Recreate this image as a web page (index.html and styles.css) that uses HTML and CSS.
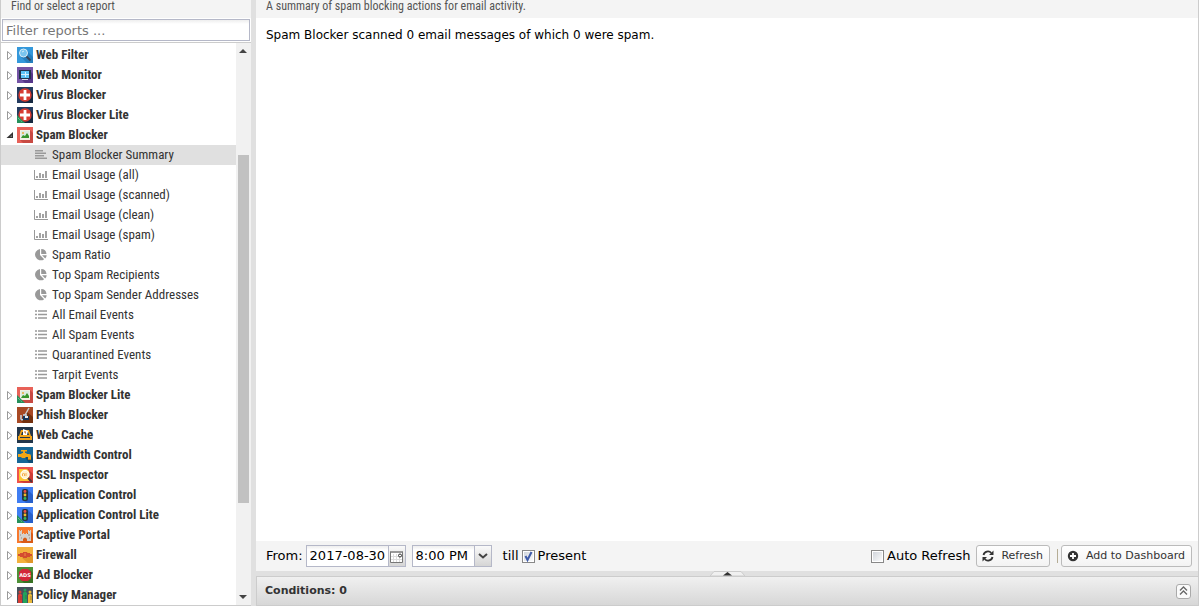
FILE: index.html
```html
<!DOCTYPE html>
<html lang="en">
<head>
<meta charset="utf-8">
<title>Reports - Spam Blocker Summary</title>
<link rel="stylesheet" href="styles.css">
</head>
<body>
<svg class="sprite" aria-hidden="true">
  <symbol id="closed" viewBox="0 0 16 16"><path d="M6.500 4.500v8l4.500-4z" fill="#fff" stroke="#999"/></symbol>
  <symbol id="open" viewBox="0 0 16 16"><path d="M12 5v6H5.500z" fill="#333"/><path d="M11 8v2H9z" fill="#777"/></symbol>
  <symbol id="lite" viewBox="0 0 16 16"><path d="M0 8l8 8H0z" fill="#25915b"/><path d="M1 11l4 4" stroke="#8fd4a9" stroke-dasharray="1 1"/></symbol>
  <symbol id="webfilter" viewBox="0 0 16 16"><path fill="#3498db" d="M0 0h16v16H0z"/><path d="M10 4l6 6v6H10L4 10z" fill="#267fbd"/><circle cx="6.500" cy="6" r="4" fill="#79c5ef" stroke="#d9edf7"/><path d="M5 5l2-1" stroke="#d9edf7"/><path d="M9.500 9.500l4 4" stroke="#35455c" stroke-width="2"/></symbol>
  <symbol id="monitor" viewBox="0 0 16 16"><path fill="#7453a5" d="M0 0h16v16H0z"/><path d="M13 4l3 3v9H8l-3-3z" fill="#56368a"/><path fill="#24334d" d="M2 3h12v9H2z"/><path fill="#5cc3f5" d="M4 4h8v7H4z"/><path d="M4 7.500h8M8.500 5v5" fill="none" stroke="#d8f2ff"/><path d="M5 12.500h6" stroke="#d8dce8"/></symbol>
  <symbol id="virus" viewBox="0 0 16 16"><path fill="#243b5f" d="M0 0h16v16H0z"/><path d="M13 3l3 3v10H7l-4-4z" fill="#162941"/><circle cx="8" cy="8" r="6.700" fill="#d63c32"/><path d="M8 3v10M3 8h10" stroke="#fff" stroke-width="2.800"/></symbol>
  <symbol id="spam" viewBox="0 0 16 16"><path fill="#e86158" d="M0 0h16v16H0z"/><path d="M13 3l3 3v10H6l-3-3z" fill="#c84a42"/><path fill="#f2eee3" d="M3 3h10v10H3z"/><path fill="#dcebe0" d="M4 4h8v7H4z"/><path fill="#37952c" d="M4 11l2-3 2 1 2-3 2 3v2z"/><circle cx="6" cy="6" r="1" fill="#eba63b"/></symbol>
  <symbol id="phish" viewBox="0 0 16 16"><path fill="#a84924" d="M0 0h16v16H0z"/><path d="M10 5l6 5v6H6l-3-3z" fill="#75310e"/><path d="M8 8l4-7" stroke="#ccc" stroke-width="1.500" fill="none"/><path d="M4 8v4q1 2 2 0M6 8h4" stroke="#c7d8e5" stroke-width="1.500" fill="none"/><path fill="#17365c" d="M6 9h6v4H6z"/><path fill="#e8edf2" d="M8 9h3v2H8z"/></symbol>
  <symbol id="cache" viewBox="0 0 16 16"><path fill="#22364b" d="M0 0h16v16H0z"/><path fill="#f3a51c" d="M4 3h8l2 6H2zM1 9h14v4H1z"/><path fill="#22364b" d="M5 5h6l1 3H4z"/><path fill="#fff" d="M6 2l5 2-1 4H6z"/><path d="M8 4v2h1" stroke="#ba641f" fill="none"/><path d="M3 10.500h10" stroke="#22364b"/></symbol>
  <symbol id="bandwidth" viewBox="0 0 16 16"><path fill="#176797" d="M0 0h16v16H0z"/><path d="M7 9l7-1 2 3v5h-4z" fill="#0e4e78"/><path fill="#f4a615" d="M1 7h3l1-1h4l1 1h2q2 0 2 2v3h-3v-2H9l-1 1H5l-1-1H1zM6 4h2v2H6zM4 3h6v1.500H4z"/><path d="M11 12.500h3" stroke="#c57b0c"/></symbol>
  <symbol id="ssl" viewBox="0 0 16 16"><path fill="#f0534b" d="M0 0h16v16H0z"/><path d="M11 2l5 5v9H7l-5-2z" fill="#ce3d34"/><path fill="#fcc431" d="M2 2h8l2 2v10H2z"/><circle cx="8" cy="7.500" r="4.200" fill="#fff1cb" stroke="#fff"/><path d="M5.500 9V7q1-2 2 0v2M9 6v3" stroke="#f3ac50" fill="none"/><path d="M11 11l4 4" stroke="#55343d" stroke-width="2"/></symbol>
  <symbol id="app" viewBox="0 0 16 16"><path fill="#3f7df2" d="M0 0h16v16H0z"/><path d="M10 2l6 6v8H9l-3-3z" fill="#2860ca"/><rect x="5" y="2" width="6" height="12" rx="2" fill="#263343"/><circle cx="8" cy="4.500" r="1.400" fill="#ef5146"/><circle cx="8" cy="8" r="1.400" fill="#f1ba28"/><circle cx="8" cy="11.500" r="1.400" fill="#31b75a"/></symbol>
  <symbol id="captive" viewBox="0 0 16 16"><path fill="#f8792d" d="M0 0h16v16H0z"/><path d="M13 4l3 3v9H5l-3-3z" fill="#d95b17"/><path fill="#d4d0cc" d="M2 3h1v1h1V3h1v4h1V6h1v1h2V6h1v1h1V3h1v1h1V3h1v11h-4v-2q-2-3-4 0v2H2z"/><path d="M3 8h1M4 11h1M11 8h2M12 11h1" stroke="#918a85"/></symbol>
  <symbol id="firewall" viewBox="0 0 16 16"><path fill="#f3b13d" d="M0 0h16v16H0z"/><path d="M10 5l6 4v7h-5l-6-5z" fill="#e09629"/><path d="M1 8h14" stroke="#d24d30" stroke-width="2"/><path fill="#d44b30" d="M3 6h4v4H3zM9 6h4v4H9zM6 5h4v6H6z"/><path d="M8 6v3" stroke="#ed8d43"/></symbol>
  <symbol id="ads" viewBox="0 0 16 16"><path fill="#4e9137" d="M0 0h16v16H0z"/><path d="M13 3l3 3v10H7l-4-4z" fill="#397224"/><path fill="#d32639" d="M5 2h6l3 3v6l-3 3H5l-3-3V5z"/></symbol>
  <symbol id="policy" viewBox="0 0 16 16"><path fill="#46515c" d="M0 0h16v16H0z"/><path fill="#d83d35" d="M1 8q2-3 4 0v8H1z"/><circle cx="3" cy="5" r="1.500" fill="#d83d35"/><path fill="#21a35a" d="M6 6q2-3 4 0v10H6z"/><circle cx="8" cy="3" r="1.500" fill="#21a35a"/><path fill="#e9b838" d="M11 8q2-3 4 0v8h-4z"/><circle cx="13" cy="5" r="1.500" fill="#e9b838"/><path d="M4 9v4M9 8v4M14 9v4" stroke="#443536" opacity=".4"/></symbol>
  <symbol id="text" viewBox="0 0 14 14"><path d="M1 2.700h8M1 5.200h11M1 7.700h9M1 10.200h12" stroke="#999" stroke-width="1.500"/></symbol>
  <symbol id="chart" viewBox="0 0 14 14"><path d="M.5 2v9.500H14" stroke="#999" fill="none"/><path d="M3 8v2M6 5v5M9 6v4M12 3v7" stroke="#999" stroke-width="1.800"/></symbol>
  <symbol id="pie" viewBox="0 0 14 14"><path fill="#999" d="M6 1v6l4.200 4.200A5.700 5.700 0 1 1 6 1zM7.200 1A5.500 5.500 0 0 1 12.500 6H7.200zM8 7.200h4.700a5 5 0 0 1-1.500 3.300z"/></symbol>
  <symbol id="list" viewBox="0 0 14 14"><path d="M1 3h2M1 6.500h2M1 10h2M4 3h9M4 6.500h9M4 10h9" stroke="#999" stroke-width="1.700"/></symbol>
  <symbol id="up" viewBox="0 0 8 4"><path d="M0 4l4-4 4 4z" fill="#444"/></symbol>
  <symbol id="down" viewBox="0 0 8 4"><path d="M0 0h8L4 4z" fill="#444"/></symbol>
  <symbol id="tick" viewBox="0 0 13 13"><path d="M3.500 6l2 4 4-8" fill="none" stroke="#3f5ba8" stroke-width="2"/></symbol>
</svg>
<div class="app">
  <aside class="sidebar">
    <header class="heading">Find or select a report</header>
    <div class="filter"><input type="text" placeholder="Filter reports ..." aria-label="Filter reports"></div>
    <div class="tree-panel">
      <ul class="tree">
        <li><svg><use href="#closed"/></svg><svg><use href="#webfilter"/></svg><span>Web Filter</span></li>
        <li><svg><use href="#closed"/></svg><svg><use href="#monitor"/></svg><span>Web Monitor</span></li>
        <li><svg><use href="#closed"/></svg><svg><use href="#virus"/></svg><span>Virus Blocker</span></li>
        <li><svg><use href="#closed"/></svg><svg><use href="#virus"/><use href="#lite"/></svg><span>Virus Blocker Lite</span></li>
        <li><svg><use href="#open"/></svg><svg><use href="#spam"/></svg><span>Spam Blocker</span></li>
        <li class="report selected"><svg><use href="#text"/></svg><span>Spam Blocker Summary</span></li>
        <li class="report"><svg><use href="#chart"/></svg><span>Email Usage (all)</span></li>
        <li class="report"><svg><use href="#chart"/></svg><span>Email Usage (scanned)</span></li>
        <li class="report"><svg><use href="#chart"/></svg><span>Email Usage (clean)</span></li>
        <li class="report"><svg><use href="#chart"/></svg><span>Email Usage (spam)</span></li>
        <li class="report"><svg><use href="#pie"/></svg><span>Spam Ratio</span></li>
        <li class="report"><svg><use href="#pie"/></svg><span>Top Spam Recipients</span></li>
        <li class="report"><svg><use href="#pie"/></svg><span>Top Spam Sender Addresses</span></li>
        <li class="report"><svg><use href="#list"/></svg><span>All Email Events</span></li>
        <li class="report"><svg><use href="#list"/></svg><span>All Spam Events</span></li>
        <li class="report"><svg><use href="#list"/></svg><span>Quarantined Events</span></li>
        <li class="report"><svg><use href="#list"/></svg><span>Tarpit Events</span></li>
        <li><svg><use href="#closed"/></svg><svg><use href="#spam"/><use href="#lite"/></svg><span>Spam Blocker Lite</span></li>
        <li><svg><use href="#closed"/></svg><svg><use href="#phish"/></svg><span>Phish Blocker</span></li>
        <li><svg><use href="#closed"/></svg><svg><use href="#cache"/></svg><span>Web Cache</span></li>
        <li><svg><use href="#closed"/></svg><svg><use href="#bandwidth"/></svg><span>Bandwidth Control</span></li>
        <li><svg><use href="#closed"/></svg><svg><use href="#ssl"/></svg><span>SSL Inspector</span></li>
        <li><svg><use href="#closed"/></svg><svg><use href="#app"/></svg><span>Application Control</span></li>
        <li><svg><use href="#closed"/></svg><svg><use href="#app"/><use href="#lite"/></svg><span>Application Control Lite</span></li>
        <li><svg><use href="#closed"/></svg><svg><use href="#captive"/></svg><span>Captive Portal</span></li>
        <li><svg><use href="#closed"/></svg><svg><use href="#firewall"/></svg><span>Firewall</span></li>
        <li><svg><use href="#closed"/></svg><svg><use href="#ads"/><text x="8" y="10" class="ads-text">ADS</text></svg><span>Ad Blocker</span></li>
        <li><svg><use href="#closed"/></svg><svg><use href="#policy"/></svg><span>Policy Manager</span></li>
      </ul>
      <div class="scrollbar" aria-hidden="true">
        <svg class="arrow"><use href="#up"/></svg>
        <div class="track"><div class="before"></div><div class="thumb"></div><div class="after"></div></div>
        <svg class="arrow"><use href="#down"/></svg>
      </div>
    </div>
  </aside>
  <div class="splitter"></div>
  <main class="content">
    <header class="heading">A summary of spam blocking actions for email activity.</header>
    <p class="summary">Spam Blocker scanned 0 email messages of which 0 were spam.</p>
    <div class="toolbar">
      <label for="from">From:</label>
      <div class="field date">
        <input id="from" type="text" value="2017-08-30">
        <button class="trigger" aria-label="Choose date"><svg width="13" height="13" viewBox="0 0 13 13"><path d="M.5 1.500h12v11H.5z" fill="#fff" stroke="#777"/><path d="M1 1h11v2H1z" fill="#999"/><path d="M3.500 4v8M6.500 4v8M9.500 4v8M1 6.500h11M1 9.500h11" stroke="#ddd"/><circle cx="10" cy="5.500" r="1.500" fill="#fff" stroke="#333"/></svg></button>
      </div>
      <div class="field time">
        <select aria-label="Start time"><option>8:00 PM</option></select>
        <span class="trigger"><svg width="10" height="6" viewBox="0 0 10 6"><path d="M1 1l4 3.500L9 1" fill="none" stroke="#444" stroke-width="2"/></svg></span>
      </div>
      <span class="till">till</span>
      <label class="check"><span class="box"><input type="checkbox" checked><svg><use href="#tick"/></svg></span>Present</label>
      <label class="check auto"><span class="box"><input type="checkbox"></span>Auto Refresh</label>
      <button class="button"><svg width="12" height="12" viewBox="0 0 12 12"><path d="M1.500 5a4.500 4.500 0 0 1 7.800-2M10.500 7a4.500 4.500 0 0 1-7.800 2" fill="none" stroke="#333" stroke-width="1.800"/><path d="M11.500.5v4.500H7zM.5 11.500V7H5z" fill="#333"/></svg>Refresh</button>
      <span class="divider"></span>
      <button class="button"><svg width="12" height="12" viewBox="0 0 12 12"><circle cx="6" cy="6" r="5.200" fill="#333"/><path d="M6 3v6M3 6h6" stroke="#fff" stroke-width="1.800"/></svg>Add to Dashboard</button>
    </div>
    <div class="collapse"><svg width="35" height="5" viewBox="0 0 35 5"><path d="M0 5l4-4.500h27L35 5z" fill="#f0f0f0" stroke="#ccc"/><path d="M13 4.500l4.500-3.500L22 4.500z" fill="#333"/></svg></div>
    <section class="conditions">
      <h2>Conditions: 0</h2>
      <button class="expand" aria-label="Expand conditions"><svg width="9" height="10" viewBox="0 0 9 10"><path d="M1 4.500L4.500 1 8 4.500M1 8.500L4.500 5 8 8.500" fill="none" stroke="#666" stroke-width="1.300"/></svg></button>
    </section>
  </main>
</div>
</body>
</html>
```

FILE: styles.css
```css
* { box-sizing: border-box; }
body {
  margin: 0;
  font: 13px/16px "DejaVu Sans", sans-serif;
  color: #000;
  background: #e0e0e0;
}
.sprite { position: absolute; width: 0; height: 0; }
.ads-text { font: bold 5px "DejaVu Sans", sans-serif; fill: #fff; text-anchor: middle; }
input, select, button { font: inherit; color: inherit; margin: 0; }
.app { display: flex; height: 100vh; overflow: hidden; }
.sidebar {
  display: flex;
  flex-direction: column;
  flex: 0 0 251px;
  border: solid #ccc;
  border-width: 0 0 1px 1px;
  background: #fff;
}
.heading {
  flex: none;
  height: 18px;
  padding: 0 10px;
  overflow: hidden;
  font: 12px/12px "Roboto Condensed", Roboto, sans-serif;
  color: #555;
  background: #f4f4f4;
}
.filter { flex: none; padding: 1px; border-bottom: 1px solid #ccc; }
.filter input {
  display: block;
  width: 100%;
  height: 22px;
  padding: 0 3px;
  border: 1px solid #b5b8c8;
  background: linear-gradient(#eee, #fff 4px);
}
.filter input::placeholder { color: #777; opacity: 1; }
.tree-panel { display: flex; flex: 1; min-height: 0; }
.tree {
  flex: 1;
  margin: 0;
  padding: 2px 0 0;
  overflow: hidden;
  list-style: none;
  font: bold 13px/20px "Roboto Condensed", Roboto, sans-serif;
  color: #333;
}
.tree li { display: flex; align-items: center; height: 20px; white-space: nowrap; }
.tree svg { flex: none; width: 16px; height: 16px; }
.tree span { margin-left: 3px; }
.tree .report { padding-left: 33px; font-weight: normal; }
.tree .report svg { width: 14px; height: 14px; }
.tree .report span { margin-left: 4px; }
.tree .selected { background: #e0e0e0; }
.scrollbar { display: flex; flex-direction: column; flex: 0 0 15px; background: #f1f1f1; }
.arrow { flex: none; width: 8px; height: 16px; margin: 0 3px; }
.track { display: flex; flex-direction: column; flex: 1; padding: 0 2px; }
.before { flex: 96; }
.thumb { flex: 348; background: #c1c1c1; }
.after { flex: 86; }
.splitter { flex: 0 0 5px; background: #e0e0e0; }
.content {
  display: flex;
  flex-direction: column;
  flex: 1;
  min-width: 0;
  border-right: 1px solid #ccc;
  background: #fff;
}
.summary { flex: 1; margin: 0; padding: 9px 10px; font-size: 12px; }
.toolbar {
  display: flex;
  align-items: center;
  height: 30px;
  padding: 0 6px 0 10px;
  background: #f4f4f4;
  white-space: nowrap;
}
.field { display: flex; height: 22px; border: 1px solid #b5b8c8; margin-left: 6px; }
.field input, .field select {
  flex: 1;
  min-width: 0;
  padding: 0 3px;
  border: 0;
  border-radius: 0;
  appearance: none;
  background: linear-gradient(#eee, #fff 4px);
}
.date { width: 100px; margin-left: 3px; }
.time { width: 80px; }
.trigger {
  display: flex;
  align-items: center;
  justify-content: center;
  width: 17px;
  padding: 0;
  border: 0;
  border-left: 1px solid #b5b8c8;
  background: linear-gradient(#fafafa, #d5d5d5);
}
.till { margin: 0 3px 0 11px; }
.check { display: flex; align-items: center; gap: 3px; }
.box { display: grid; width: 13px; height: 13px; }
.box > * { grid-area: 1 / 1; width: 13px; height: 13px; }
.box input {
  appearance: none;
  border: 1px solid #888;
  background: linear-gradient(135deg, #ccd1d8, #fff);
  box-shadow: inset 0 0 0 1px #fff;
}
.box svg { z-index: 1; pointer-events: none; }
.auto { margin-left: auto; }
.button {
  display: flex;
  align-items: center;
  gap: 7px;
  height: 22px;
  padding: 0 6px 0 5px;
  border: 1px solid #bbb;
  border-radius: 3px;
  font-size: 11px;
  color: #333;
  background: linear-gradient(#fff, #f3f3f3);
}
.auto + .button { margin-left: 6px; }
.divider { width: 1px; height: 14px; margin: 0 3px 0 7px; background: #b5ad96; }
.collapse { display: flex; justify-content: center; height: 5px; background: #e0e0e0; }
.conditions {
  display: flex;
  align-items: center;
  justify-content: space-between;
  height: 30px;
  padding: 0 7px 0 8px;
  border: 1px solid #ccc;
  border-right: 0;
  background: linear-gradient(#f0f0f0, #d7d7d7);
}
.conditions h2 { margin: 0; font-size: 11px; color: #333; }
.expand {
  display: flex;
  align-items: center;
  justify-content: center;
  width: 15px;
  height: 15px;
  padding: 0;
  border: 1px solid #aaa;
  border-radius: 3px;
  background: #fafafa;
}
```
